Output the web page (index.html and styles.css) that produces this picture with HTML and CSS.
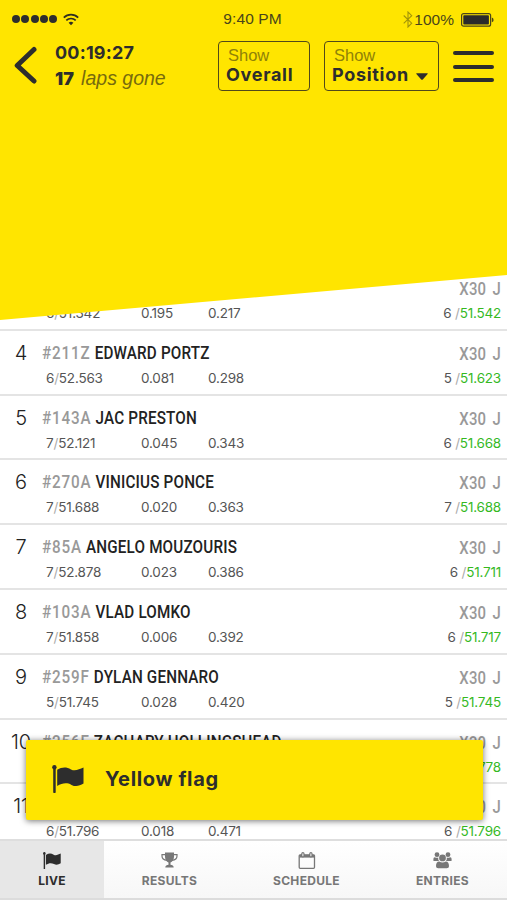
FILE: index.html
```html
<!DOCTYPE html>
<html lang="en">
<head>
    <meta charset="UTF-8">
    <meta name="viewport" content="width=device-width, initial-scale=1.0">
    <title>Live timing</title>
    <link rel="stylesheet" href="styles.css">
</head>
<body>
    <div class="app">
        <header class="header">
            <div class="status-bar">
                <div class="signal">
                    <i></i><i></i><i></i><i></i><i></i>
                    <svg class="wifi" width="16" height="13" viewBox="0 0 16 13" fill="none" stroke="#2f2d22" stroke-width="1.7">
                        <path d="M.8 4.6a10.4 10.4 0 0 1 14.4 0M3.3 7.4a6.8 6.8 0 0 1 9.4 0"/>
                        <path d="M5.6 9.7a3.6 3.6 0 0 1 4.8 0L8 12.2z" fill="#2f2d22" stroke="none"/>
                    </svg>
                </div>
                <div class="clock">9:40 PM</div>
                <div class="power">
                    <svg width="10" height="17" viewBox="0 0 10 17" fill="none" stroke="#a39408" stroke-width="1.1">
                        <path d="M.7 4.5l8 7.7L5 16V1l3.7 3.7-8 7.7"/>
                    </svg>
                    <span>100%</span>
                    <svg class="battery" width="33" height="14" viewBox="0 0 33 14">
                        <rect x=".6" y=".6" width="29" height="12.6" rx="2" fill="none" stroke="#4a451a" stroke-width="1.2"/>
                        <rect x="2.3" y="2.3" width="25.6" height="9.2" rx=".8" fill="#2b2b2b"/>
                        <path d="M30.8 4.6q1.8.5 1.8 2.3t-1.8 2.3z" fill="#4a451a"/>
                    </svg>
                </div>
            </div>
            <div class="toolbar">
                <svg class="back" width="23" height="38" viewBox="0 0 23 38" fill="none" stroke="#2d2d2d" stroke-width="5" stroke-linecap="round" stroke-linejoin="round">
                    <path d="M20 3.5L3.2 19.5 20 35"/>
                </svg>
                <div class="race">
                    <div class="race-time">00:19:27</div>
                    <div class="race-laps"><b>17</b> <em>laps gone</em></div>
                </div>
                <div class="select select-class">
                    <span class="select-label">Show</span>
                    <span class="select-value">Overall</span>
                </div>
                <div class="select select-sort">
                    <span class="select-label">Show</span>
                    <span class="select-value">Position<svg width="12" height="7" viewBox="0 0 12 7"><path d="M.6.3h10.8q.6.3.2.8L6.8 6.4q-.8.7-1.6 0L.4 1.1Q0 .6.6.3z" fill="#2d2d2d"/></svg></span>
                </div>
                <div class="menu"><i></i><i></i><i></i></div>
            </div>
        </header>

        <main class="list">
            <div class="row">
                <div class="pos">3</div>
                <div class="driver"></div>
                <div class="category">X30 J</div>
                <div class="last">6<s>/</s>51.342</div>
                <div class="gap">0.195</div>
                <div class="diff">0.217</div>
                <div class="best">6 <s>/</s><b>51.542</b></div>
            </div>
            <div class="row">
                <div class="pos">4</div>
                <div class="driver"><span>#211Z</span> EDWARD PORTZ</div>
                <div class="category">X30 J</div>
                <div class="last">6<s>/</s>52.563</div>
                <div class="gap">0.081</div>
                <div class="diff">0.298</div>
                <div class="best">5 <s>/</s><b>51.623</b></div>
            </div>
            <div class="row">
                <div class="pos">5</div>
                <div class="driver"><span>#143A</span> JAC PRESTON</div>
                <div class="category">X30 J</div>
                <div class="last">7<s>/</s>52.121</div>
                <div class="gap">0.045</div>
                <div class="diff">0.343</div>
                <div class="best">6 <s>/</s><b>51.668</b></div>
            </div>
            <div class="row">
                <div class="pos">6</div>
                <div class="driver"><span>#270A</span> VINICIUS PONCE</div>
                <div class="category">X30 J</div>
                <div class="last">7<s>/</s>51.688</div>
                <div class="gap">0.020</div>
                <div class="diff">0.363</div>
                <div class="best">7 <s>/</s><b>51.688</b></div>
            </div>
            <div class="row">
                <div class="pos">7</div>
                <div class="driver"><span>#85A</span> ANGELO MOUZOURIS</div>
                <div class="category">X30 J</div>
                <div class="last">7<s>/</s>52.878</div>
                <div class="gap">0.023</div>
                <div class="diff">0.386</div>
                <div class="best">6 <s>/</s><b>51.711</b></div>
            </div>
            <div class="row">
                <div class="pos">8</div>
                <div class="driver"><span>#103A</span> VLAD LOMKO</div>
                <div class="category">X30 J</div>
                <div class="last">7<s>/</s>51.858</div>
                <div class="gap">0.006</div>
                <div class="diff">0.392</div>
                <div class="best">6 <s>/</s><b>51.717</b></div>
            </div>
            <div class="row">
                <div class="pos">9</div>
                <div class="driver"><span>#259F</span> DYLAN GENNARO</div>
                <div class="category">X30 J</div>
                <div class="last">5<s>/</s>51.745</div>
                <div class="gap">0.028</div>
                <div class="diff">0.420</div>
                <div class="best">5 <s>/</s><b>51.745</b></div>
            </div>
            <div class="row">
                <div class="pos">10</div>
                <div class="driver"><span>#256F</span> ZACHARY HOLLINGSHEAD</div>
                <div class="category">X30 J</div>
                <div class="best"><b>51.778</b></div>
            </div>
            <div class="row">
                <div class="pos">11</div>
                <div class="driver"></div>
                <div class="category">X30 J</div>
                <div class="last">6<s>/</s>51.796</div>
                <div class="gap">0.018</div>
                <div class="diff">0.471</div>
                <div class="best">6 <s>/</s><b>51.796</b></div>
            </div>
        </main>

        <div class="flag-alert">
            <svg width="32" height="28" viewBox="0 0 32 28" fill="#2d2d2d">
                <circle cx="2.4" cy="2.3" r="2.2"/>
                <rect x="1.2" y="2" width="2.5" height="26" rx=".8"/>
                <path d="M5.2 4.8C10 2 14 1.5 19 4.4c4 2.2 8-.1 12.5-1.8V18.6c-4 2.5-8 3.4-12 1.3-5-2.7-9.5-1.6-14.3 1.1z"/>
            </svg>
            <span>Yellow flag</span>
        </div>

        <nav class="tabs">
            <a class="tab active">
                <svg width="18" height="17" viewBox="0 0 32 28" preserveAspectRatio="none" fill="currentColor">
                    <circle cx="2.4" cy="2.3" r="2.2"/>
                    <rect x="1.2" y="2" width="2.5" height="26"/>
                    <path d="M5.2 4.8C10 2 14 1.5 19 4.4c4 2.2 8-.1 12.5-1.8V18.6c-4 2.5-8 3.4-12 1.3-5-2.7-9.5-1.6-14.3 1.1z"/>
                </svg>
                <span>LIVE</span>
            </a>
            <a class="tab">
                <svg width="17" height="17" viewBox="0 0 17 17" fill="currentColor">
                    <path d="M4 .5h9v4.3c0 3-1.7 5.2-3.5 5.8v2.1c1.7.1 3.2 1 3.2 2.8H4.3c0-1.8 1.5-2.7 3.2-2.8v-2.1C5.7 10 4 7.8 4 4.8z"/>
                    <path d="M4.3 2.6H1v1.5c0 2.3 2.2 4.1 5 4.3M12.7 2.6H16v1.5c0 2.3-2.2 4.1-5 4.3" fill="none" stroke="currentColor" stroke-width="1.2"/>
                </svg>
                <span>RESULTS</span>
            </a>
            <a class="tab">
                <svg width="18" height="17" viewBox="0 0 18 17" fill="none" stroke="currentColor">
                    <rect x="1.2" y="2.8" width="15.3" height="13.5" rx="1" stroke-width="1.3"/>
                    <path d="M1.5 4.2h15" stroke-width="2.8"/>
                    <path d="M4.9 1.8v2M12.9 1.8v2" stroke-width="3.4" stroke-linecap="round"/>
                    <path d="M4.9 1.8v2M12.9 1.8v2" stroke="#fafafa" stroke-width="1" stroke-linecap="round"/>
                </svg>
                <span>SCHEDULE</span>
            </a>
            <a class="tab">
                <svg width="19" height="17" viewBox="0 0 19 17" fill="currentColor">
                    <circle cx="4" cy="2.7" r="2.4"/>
                    <circle cx="15" cy="2.7" r="2.4"/>
                    <path d="M.4 8.6V7q0-1.8 1.5-1.7 1.8.9 3.3.3-.3 2.1.8 3.5H1.2q-.8 0-.8-.5zM18.600 8.6V7q0-1.8-1.5-1.7-1.8.9-3.3.3.3 2.1-.8 3.5h4.800q.8 0 .8-.5z"/>
                    <circle cx="9.500" cy="5.9" r="3.4"/>
                    <path d="M3 14.2c0-3 1-4.7 3.2-4.7q3.3 2 6.600 0c2.2 0 3.2 1.7 3.2 4.7q0 2.1-2.2 2.1H5.2Q3 16.3 3 14.2z"/>
                </svg>
                <span>ENTRIES</span>
            </a>
        </nav>
    </div>
</body>
</html>
```
FILE: styles.css
```css
* {
    box-sizing: border-box;
}
body {
    margin: 0;
    font-family: Inter, sans-serif;
    color: #2d2d2d;
    background: #fff;
}
.app {
    position: relative;
    height: 900px;
    display: flex;
    flex-direction: column;
    overflow: hidden;
}

/* yellow header with slanted bottom edge */
.header {
    position: relative;
    z-index: 1;
    flex: none;
    height: 320px;
    background: #ffe500;
    clip-path: polygon(0 0, 100% 0, 100% 275px, 0 100%);
}
.status-bar {
    display: grid;
    grid-template-columns: 1fr auto 1fr;
    align-items: center;
    height: 38px;
    padding: 0 13px 0 12px;
    font: 15.5px "Liberation Sans", sans-serif;
    color: #4a451a;
}
.signal {
    display: flex;
    align-items: center;
    gap: 1.3px;
}
.signal i {
    width: 8px;
    height: 8px;
    border-radius: 50%;
    background: #2d2d2d;
}
.wifi {
    margin-left: 5px;
}
.clock {
    margin-left: -1px;
    letter-spacing: 0.1px;
}
.power {
    display: flex;
    align-items: center;
    justify-content: flex-end;
    padding-top: 1px;
}
.power span {
    margin: 0 7px 0 1px;
}
.toolbar {
    display: flex;
    align-items: flex-start;
    padding: 3px 13px 0 14px;
}
.back {
    margin-top: 5px;
}
.race {
    width: 163px;
    margin-left: 18px;
    font-size: 18px;
    font-weight: 700;
    white-space: nowrap;
}
.race-time {
    line-height: 24px;
    letter-spacing: 0.2px;
}
.race-laps {
    line-height: 27px;
}
.race-laps em {
    margin-left: 3px;
    font: italic 19.5px "Liberation Sans", sans-serif;
    color: #776b0d;
}
.select {
    height: 50px;
    border: 1.5px solid #51491a;
    border-radius: 4px;
    padding: 4px 7px 0;
}
.select-class {
    width: 92px;
}
.select-sort {
    width: 115px;
    margin-left: 14px;
}
.select span {
    display: block;
    white-space: nowrap;
}
.select-label {
    padding-left: 2px;
    font: 16.5px/19px "Liberation Sans", sans-serif;
    color: #8f8108;
}
.select-value {
    font-size: 18px;
    line-height: 20px;
    font-weight: 700;
    letter-spacing: 0.7px;
}
.select-value svg {
    margin: 0 0 1px 7px;
}
.menu {
    display: flex;
    flex-direction: column;
    gap: 9.5px;
    width: 41px;
    margin: 10px 0 0 14px;
}
.menu i {
    height: 4px;
    border-radius: 2px;
    background: #2d2d2d;
}

/* timing rows */
.list {
    flex: 1;
    min-height: 0;
    margin-top: -54px;
    overflow: hidden;
}
.row {
    display: grid;
    grid-template-columns: 42px 99px 67px 1fr 90px;
    grid-template-rows: 27px 22px;
    height: 64.8px;
    padding: 9px 6px 0 0;
    border-bottom: 2px solid #e4e4e4;
    font-size: 13.5px;
    line-height: 22px;
    letter-spacing: -0.2px;
    color: #555;
    white-space: nowrap;
}
.pos {
    text-align: center;
    font-size: 20px;
    line-height: 26px;
    font-weight: 300;
    color: #222;
}
.driver {
    grid-column: 2 / 5;
    justify-self: start;
    font-family: Roboto, sans-serif;
    font-size: 17.5px;
    line-height: 27px;
    font-weight: 500;
    letter-spacing: 0.2px;
    color: #222;
    transform: scaleX(0.87);
    transform-origin: left;
}
.driver span {
    letter-spacing: 1px;
    color: #999;
}
.category {
    grid-column: 5;
    justify-self: end;
    font: 500 17.5px/29px Roboto, sans-serif;
    letter-spacing: 0.2px;
    word-spacing: 3px;
    color: #999;
    transform: scaleX(0.85);
    transform-origin: right;
}
.last {
    grid-column: 2;
    padding-left: 4px;
}
.gap {
    grid-column: 3;
}
.diff {
    grid-column: 4;
}
.best {
    grid-column: 5;
    text-align: right;
}
.best b {
    font-weight: 400;
    color: #35b91f;
}
.row s {
    text-decoration: none;
    color: #aaa;
}

.flag-alert {
    position: absolute;
    z-index: 2;
    left: 26px;
    top: 740px;
    display: flex;
    align-items: center;
    gap: 21px;
    width: 457px;
    height: 80px;
    padding: 0 0 2px 26px;
    border-radius: 2px;
    background: #ffe500;
    box-shadow: 0 1px 6px rgba(0,0,0,0.55);
    font-size: 20px;
    font-weight: 700;
    letter-spacing: 0.65px;
}

.tabs {
    display: grid;
    grid-template-columns: 104px 131px 143px 129px;
    flex: none;
    height: 61px;
    border-top: 2px solid #dedede;
    border-bottom: 2px solid #dcdcdc;
    background: linear-gradient(#fff, #f7f7f7);
}
.tab {
    display: flex;
    flex-direction: column;
    align-items: center;
    gap: 4px;
    padding-top: 11px;
    font-size: 12px;
    line-height: 15px;
    font-weight: 700;
    letter-spacing: 0.3px;
    color: #777;
}
.tab.active {
    background: #e7e7e7;
    color: #2d2d2d;
}
```
